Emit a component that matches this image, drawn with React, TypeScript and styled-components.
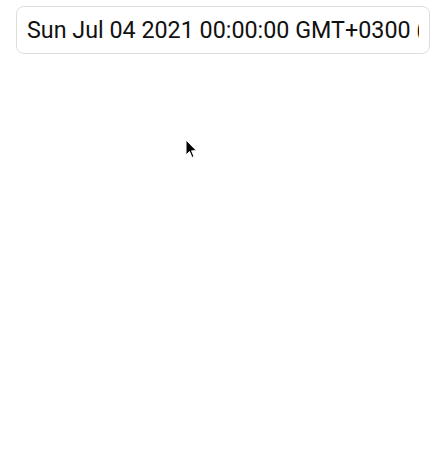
import React from 'react';
import styled, { createGlobalStyle } from 'styled-components';

const GlobalStyle = createGlobalStyle`
  body {
    margin: 0;
    background: #fff;
    font-family: Roboto, "Liberation Sans", sans-serif;
  }
`;

const Page = styled.div`
  position: relative;
  height: 450px;
  padding: 6px 14px 0 16px;
  box-sizing: border-box;
`;

const DateInput = styled.input`
  display: block;
  width: 100%;
  height: 48px;
  box-sizing: border-box;
  padding: 0 10px;
  border: 1px solid #dedede;
  border-radius: 8px;
  font-family: Roboto, "Liberation Sans", sans-serif;
  font-size: 23.3px;
  color: #111;
  background: #fff;
  outline: none;
`;

const Pointer = styled.svg`
  position: absolute;
  left: 185px;
  top: 139px;
  pointer-events: none;
`;

const App = () => {
  const value = 'Sun Jul 04 2021 00:00:00 GMT+0300 (Eastern European Summer Time)';
  return (
    <>
      <GlobalStyle />
      <Page>
        <DateInput type="text" value={value} readOnly />
        <Pointer width="14" height="22" viewBox="0 0 14 22">
          <path
            d="M1 1 L1 16 L4.5 12.5 L7 18.5 L9 17.6 L6.6 11.8 L11.5 11.8 Z"
            fill="#000"
            stroke="#fff"
            strokeWidth="1"
            strokeLinejoin="round"
          />
        </Pointer>
      </Page>
    </>
  );
};

export default App;
